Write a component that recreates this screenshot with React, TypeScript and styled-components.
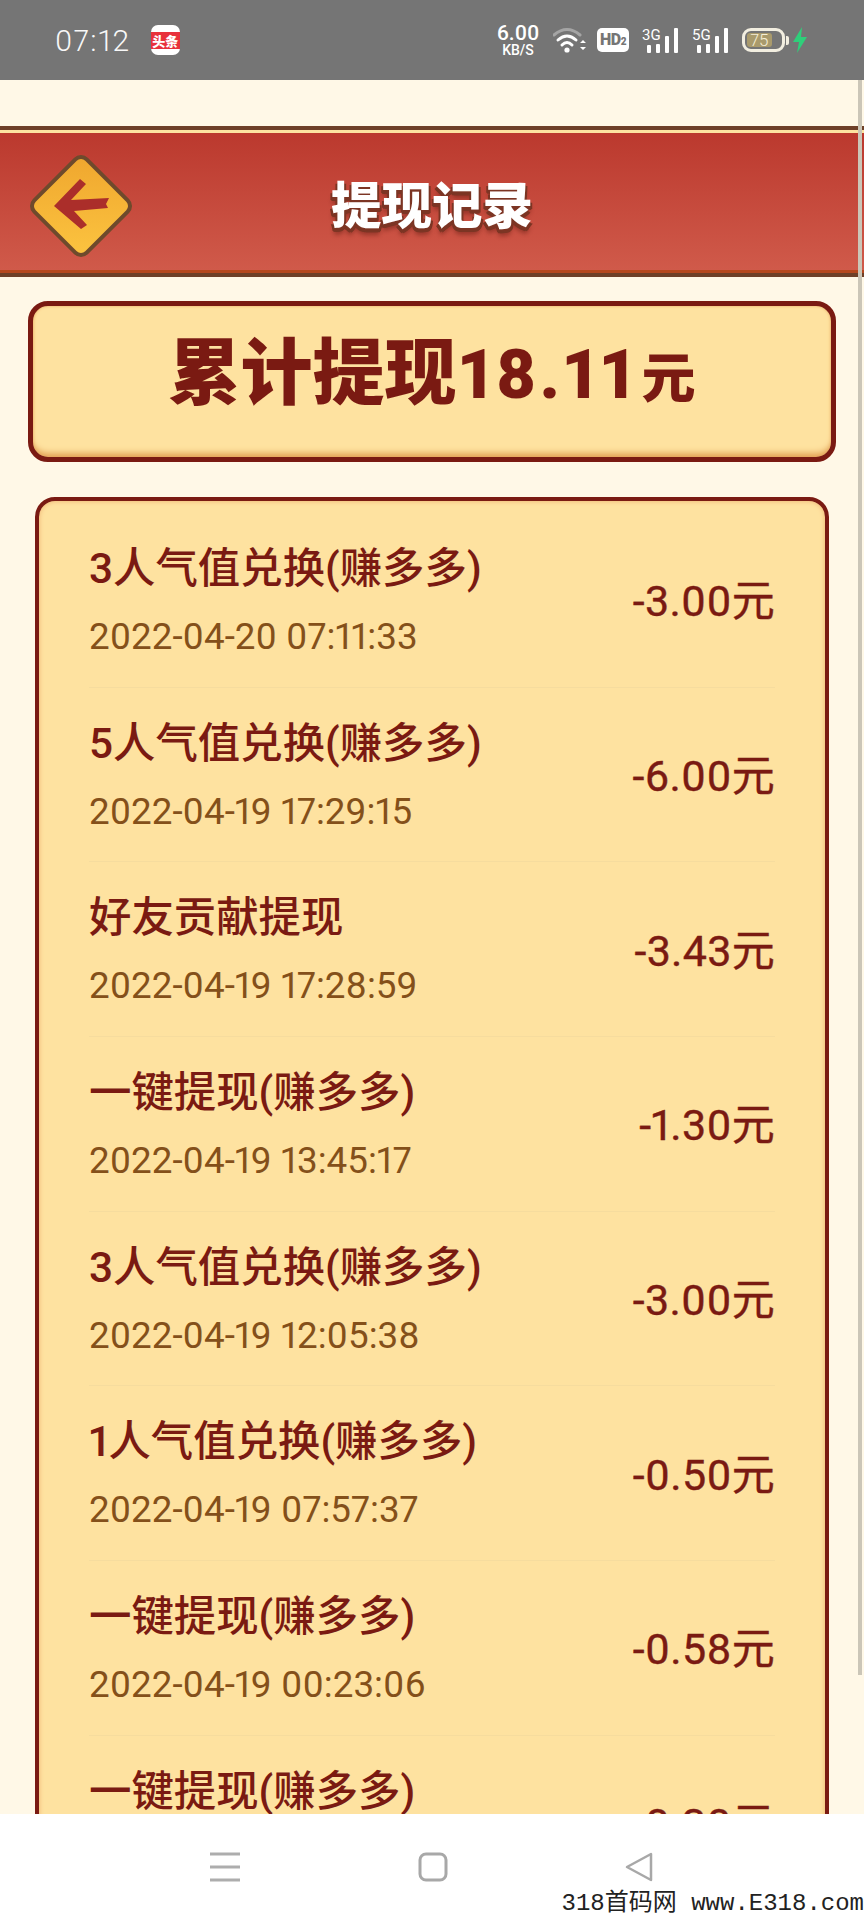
import React from "react";
import styled, { createGlobalStyle } from "styled-components";

const CJK = `Roboto, "Noto Sans CJK SC", sans-serif`;

const GlobalStyle = createGlobalStyle`
  html, body {
    margin: 0;
    padding: 0;
    background: #fff;
  }
  * {
    box-sizing: border-box;
  }
`;

const Page = styled.div`
  width: 864px;
  height: 1920px;
  display: flex;
  flex-direction: column;
  overflow: hidden;
  position: relative;
  font-family: ${CJK};
  font-variant-numeric: proportional-nums;
`;

const StatusBar = styled.div`
  height: 80px;
  flex: none;
  background: #757575;
  color: #fff;
  display: flex;
  align-items: center;
  justify-content: space-between;
  padding: 0 56px 0 55px;
`;

const StatusLeft = styled.div`
  display: flex;
  align-items: center;
  gap: 20px;
`;

const Clock = styled.span`
  font-size: 30px;
  font-weight: 300;
  letter-spacing: 1.5px;
  color: #f8f8f8;
`;

const NewsIcon = styled.div`
  width: 29px;
  height: 30px;
  border-radius: 7px;
  background: #fff;
  display: flex;
  align-items: center;
  justify-content: center;
`;

const NewsBand = styled.span`
  width: 100%;
  height: 17px;
  background: #e8323c;
  color: #fff;
  font-size: 13px;
  font-weight: 900;
  line-height: 17px;
  text-align: center;
  font-family: "Noto Sans CJK SC", sans-serif;
`;

const StatusRight = styled.div`
  display: flex;
  align-items: center;
`;

const Speed = styled.div`
  width: 42px;
  display: flex;
  flex-direction: column;
  align-items: center;
  font-weight: 500;
  margin-right: 14px;
`;

const SpeedValue = styled.span`
  font-size: 21px;
  line-height: 20px;
`;

const SpeedUnit = styled.span`
  font-size: 14px;
  line-height: 14px;
`;

const HdBadge = styled.span`
  width: 32px;
  height: 24px;
  margin: 0 13px 0 11px;
  border-radius: 5px;
  background: #fff;
  color: #757575;
  font-size: 16px;
  font-weight: 900;
  line-height: 24px;
  text-align: center;
  letter-spacing: -0.5px;

  small {
    font-size: 10px;
  }
`;

const SignalWrap = styled.svg`
  display: block;
  margin-right: 13px;
`;

const Battery = styled.div`
  width: 43px;
  height: 24px;
  padding: 2px;
  border: 3px solid #f2eee0;
  border-radius: 9px;
  display: flex;
`;

const BatteryFill = styled.div`
  width: 75%;
  height: 100%;
  border-radius: 3px;
  background: #a99a6c;
  color: #f5eed6;
  font-size: 17px;
  font-weight: 300;
  line-height: 14px;
  text-align: center;
`;

const BatteryTip = styled.span`
  width: 3px;
  height: 9px;
  margin: 0 3px 0 1px;
  border-radius: 0 2px 2px 0;
  background: #f2eee0;
`;

const Body = styled.div`
  flex: 1;
  min-height: 0;
  overflow: hidden;
  position: relative;
  background: #fff8e7;
  padding-top: 46px;
`;

const ScrollThumb = styled.div`
  position: absolute;
  top: 0;
  right: 2px;
  width: 4px;
  height: 1595px;
  background: #cbc6b8;
`;

const Header = styled.header`
  height: 151px;
  display: grid;
  grid-template-columns: 1fr auto 1fr;
  align-items: center;
  padding: 9px 29px 0;
  border-top: 4px solid #6e4028;
  border-bottom: 4px solid #6e4028;
  background: linear-gradient(
    to bottom,
    #fde3a0 0,
    #fde3a0 3px,
    #bb392e 3px,
    #d05a4a 140px,
    #b5481e 140px
  );
`;

const BackButton = styled.svg`
  display: block;
`;

const Title = styled.h1`
  margin: 0 0 8px;
  color: #fff;
  font-family: "Noto Sans CJK SC", sans-serif;
  font-size: 50.5px;
  font-weight: 900;
  line-height: 60px;
  text-shadow: 0 2px 0 #7c3524, 1px 4px 0 #7c3524, -1px 4px 0 #7c3524,
    2px 3px 0 #7c3524, -2px 3px 0 #7c3524, 0 7px 4px rgba(80, 20, 10, 0.4);
`;

const SummaryBox = styled.div`
  height: 161px;
  margin: 24px 28px 0;
  display: flex;
  align-items: baseline;
  justify-content: center;
  background: #fee2a0;
  border: 5px solid #7a1a12;
  border-radius: 20px;
  box-shadow: inset 0 0 3px #e8a860, inset 0 -7px 6px -3px #e3a458;
  color: #7a1a12;
  font-weight: 900;
  line-height: 121px;
`;

const SummaryLabel = styled.span`
  font-family: "Noto Sans CJK SC", sans-serif;
  font-size: 72px;
`;

const SummaryValue = styled.span`
  margin: 0 4px 0 2px;
  font-size: 68px;
  font-weight: 900;
  letter-spacing: 3px;
`;

const SummaryUnit = styled.span`
  font-family: "Noto Sans CJK SC", sans-serif;
  font-size: 54px;
`;

const RecordCard = styled.div`
  margin: 35px 35px 0;
  padding: 12px 50px 0;
  height: 1400px;
  background: #fee2a0;
  border: 4px solid #7a1a12;
  border-radius: 20px;
  box-shadow: inset 0 0 5px #eeb070;
`;

const Row = styled.div`
  height: 174.7px;
  display: flex;
  align-items: center;
  justify-content: space-between;
  border-bottom: 1px solid #f6dc9e;
`;

const RowInfo = styled.div`
  display: flex;
  flex-direction: column;
`;

const RowTitle = styled.span`
  color: #7a1a12;
  font-size: 42.4px;
  font-weight: 500;
  line-height: 56px;
`;

const RowDate = styled.span`
  margin-top: 18px;
  color: #84501a;
  font-size: 36.8px;
  line-height: 44px;
`;

const RowAmount = styled.span`
  margin-top: 3px;
  color: #7a1a12;
  font-size: 43px;
  letter-spacing: 0.3px;
  line-height: 56px;
  -webkit-text-stroke: 0.4px #7a1a12;
`;

const NavBar = styled.nav`
  height: 106px;
  flex: none;
  background: #fff;
  display: flex;
  align-items: flex-start;
  padding: 38px 0 0 210px;
`;

const NavIcon = styled.svg<{ $gap: number }>`
  display: block;
  margin-right: ${(p) => p.$gap}px;
`;

const Watermark = styled.div`
  position: absolute;
  right: 0;
  bottom: 1px;
  color: #222;
  font-family: "Liberation Mono", "Noto Sans CJK SC", monospace;
  font-size: 24px;
  line-height: 30px;
  white-space: nowrap;
`;

const records = [
  { title: "3人气值兑换(赚多多)", date: "2022-04-20 07:11:33", amount: "-3.00元" },
  { title: "5人气值兑换(赚多多)", date: "2022-04-19 17:29:15", amount: "-6.00元" },
  { title: "好友贡献提现", date: "2022-04-19 17:28:59", amount: "-3.43元" },
  { title: "一键提现(赚多多)", date: "2022-04-19 13:45:17", amount: "-1.30元" },
  { title: "3人气值兑换(赚多多)", date: "2022-04-19 12:05:38", amount: "-3.00元" },
  { title: "1人气值兑换(赚多多)", date: "2022-04-19 07:57:37", amount: "-0.50元" },
  { title: "一键提现(赚多多)", date: "2022-04-19 00:23:06", amount: "-0.58元" },
  { title: "一键提现(赚多多)", date: "2022-04-18 22:10:41", amount: "-0.30元" },
];

const Signal: React.FC<{ label: string }> = ({ label }) => (
  <SignalWrap width="37" height="26" viewBox="0 0 37 26">
    <text x="0" y="13" fontSize="15" fontFamily="Roboto, sans-serif" fill="#fff">
      {label}
    </text>
    <rect x="5" y="18" width="4" height="8" rx="1" fill="#fff" />
    <rect x="14" y="17" width="4" height="9" rx="1" fill="#fff" />
    <rect x="23" y="9" width="4" height="17" rx="1" fill="#fff" />
    <rect x="32" y="1" width="4" height="25" rx="1" fill="#fff" />
  </SignalWrap>
);

const App: React.FC = () => {
  return (
    <Page>
      <GlobalStyle />
      <StatusBar>
        <StatusLeft>
          <Clock>07:12</Clock>
          <NewsIcon>
            <NewsBand>头条</NewsBand>
          </NewsIcon>
        </StatusLeft>
        <StatusRight>
          <Speed>
            <SpeedValue>6.00</SpeedValue>
            <SpeedUnit>KB/S</SpeedUnit>
          </Speed>
          <svg width="33" height="26" viewBox="0 0 33 26" fill="none" strokeLinecap="round">
            <path d="M1 8 Q14 -3 27 8" stroke="#a5a5a5" strokeWidth="3" />
            <path d="M5 13 Q14 5 23 13" stroke="#fff" strokeWidth="3" />
            <path d="M9 18 Q14 13 19 18" stroke="#fff" strokeWidth="3" />
            <circle cx="14" cy="23" r="2.6" fill="#fff" />
            <path d="M27 16 l3 -3 l3 3 z M27 20 l3 3 l3 -3 z" fill="#fff" />
          </svg>
          <HdBadge>
            HD<small>2</small>
          </HdBadge>
          <Signal label="3G" />
          <Signal label="5G" />
          <Battery>
            <BatteryFill>75</BatteryFill>
          </Battery>
          <BatteryTip />
          <svg width="16" height="26" viewBox="0 0 16 26">
            <path d="M10 0 L1 15 H7 L5 26 L15 10 H9 Z" fill="#2fcf7a" />
          </svg>
        </StatusRight>
      </StatusBar>

      <Body>
        <ScrollThumb />
        <Header>
          <BackButton width="104" height="104" viewBox="0 0 104 104">
            <defs>
              <linearGradient id="backFill" x1="0" y1="0" x2="1" y2="1">
                <stop offset="0" stopColor="#efa62e" />
                <stop offset="1" stopColor="#fcc440" />
              </linearGradient>
            </defs>
            <rect
              x="15"
              y="15"
              width="74"
              height="74"
              rx="8"
              transform="rotate(45 52 52)"
              fill="url(#backFill)"
              stroke="#6e4a2c"
              strokeWidth="4"
            />
            <path
              d="M25 52 L51 25 L57 30 L42 46 L80 44 L77 50 L79 54 L45 57 L58 71 L52 75 Z"
              fill="#ab2e2a"
            />
          </BackButton>
          <Title>提现记录</Title>
        </Header>

        <SummaryBox>
          <SummaryLabel>累计提现</SummaryLabel>
          <SummaryValue>18.11</SummaryValue>
          <SummaryUnit>元</SummaryUnit>
        </SummaryBox>

        <RecordCard>
          {records.map((r, i) => (
            <Row key={i}>
              <RowInfo>
                <RowTitle>{r.title}</RowTitle>
                <RowDate>{r.date}</RowDate>
              </RowInfo>
              <RowAmount>{r.amount}</RowAmount>
            </Row>
          ))}
        </RecordCard>
      </Body>

      <NavBar>
        <NavIcon $gap={178} width="30" height="30" viewBox="0 0 30 30">
          <path d="M0 2 H30 M0 15 H30 M0 28 H30" stroke="#adadad" strokeWidth="3" />
        </NavIcon>
        <NavIcon $gap={176} width="30" height="30" viewBox="0 0 30 30" fill="none">
          <rect x="2" y="2" width="26" height="26" rx="6" stroke="#a8a8a8" strokeWidth="3" />
        </NavIcon>
        <NavIcon $gap={0} width="30" height="30" viewBox="0 0 30 30" fill="none">
          <path d="M27 2 V28 L3 15 Z" stroke="#a8a8a8" strokeWidth="2.5" strokeLinejoin="round" />
        </NavIcon>
      </NavBar>

      <Watermark>318首码网 www.E318.com</Watermark>
    </Page>
  );
};

export default App;
